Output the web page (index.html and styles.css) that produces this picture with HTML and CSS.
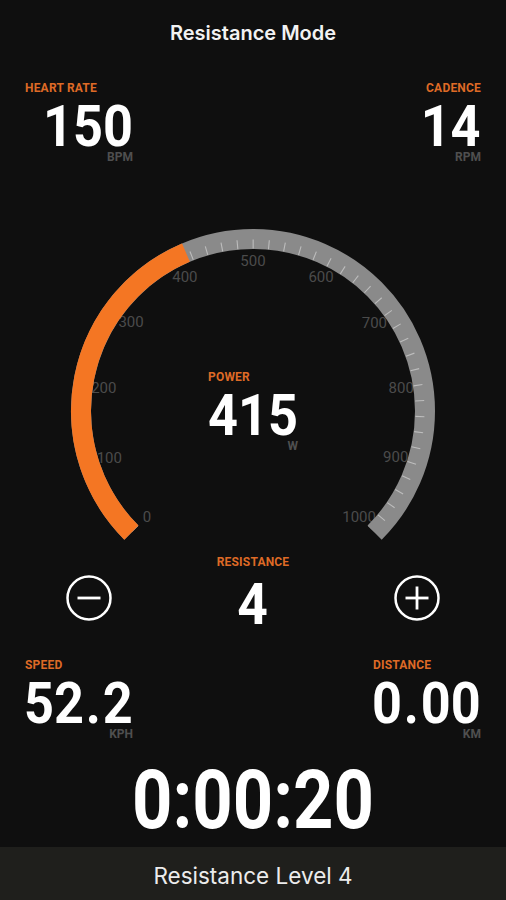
FILE: index.html
```html
<!DOCTYPE html>
<html lang="en">
<head>
    <meta charset="UTF-8">
    <meta name="viewport" content="width=device-width, initial-scale=1.0">
    <title>Resistance Mode</title>
    <link rel="stylesheet" href="styles.css">
</head>
<body>

    <header class="title">Resistance Mode</header>

    <section class="stat-row top-row">
        <div class="stat">
            <div class="stat-label">HEART RATE</div>
            <div class="stat-value">150</div>
            <div class="stat-unit">BPM</div>
        </div>
        <div class="stat">
            <div class="stat-label end">CADENCE</div>
            <div class="stat-value">14</div>
            <div class="stat-unit">RPM</div>
        </div>
    </section>

    <section class="gauge">
        <svg class="gauge-svg" width="506" height="330" viewBox="0 0 506 330">
            <g class="gauge-labels">
                <text x="146.9" y="301.1">0</text>
                <text x="109.3" y="241.8">100</text>
                <text x="103.8" y="171.5">200</text>
                <text x="131.1" y="106.3">300</text>
                <text x="184.9" y="61.3">400</text>
                <text x="253" y="45">500</text>
                <text x="321.1" y="61.3">600</text>
                <text x="374.4" y="106.8">700</text>
                <text x="401.2" y="171.5">800</text>
                <text x="395.7" y="241.4">900</text>
                <text x="359.1" y="301.1">1000</text>
            </g>
            <path class="track" d="M131.38 316.62 A172 172 0 1 1 374.62 316.62"/>
            <path class="ticks" d="M134.9 313.1 A167 167 0 1 1 371.1 313.1"/>
            <path class="fill" d="M131.38 316.62 A172 172 0 0 1 185.94 36.62"/>
        </svg>

        <div class="stat power">
            <div class="stat-label">POWER</div>
            <div class="stat-value">415</div>
            <div class="stat-unit">W</div>
        </div>
    </section>

    <section class="control-row">
        <button class="round-btn" aria-label="Decrease resistance">
            <svg width="46" height="46" viewBox="0 0 46 46">
                <circle cx="23" cy="23" r="21.5" fill="none" stroke="#fff" stroke-width="2.5"/>
                <line x1="11.5" y1="23" x2="34.5" y2="23" stroke="#fff" stroke-width="2.8"/>
            </svg>
        </button>
        <div class="level">
            <div class="stat-label">RESISTANCE</div>
            <div class="level-value">4</div>
        </div>
        <button class="round-btn" aria-label="Increase resistance">
            <svg width="46" height="46" viewBox="0 0 46 46">
                <circle cx="23" cy="23" r="21.5" fill="none" stroke="#fff" stroke-width="2.5"/>
                <line x1="11.5" y1="23" x2="34.5" y2="23" stroke="#fff" stroke-width="2.8"/>
                <line x1="23" y1="11.5" x2="23" y2="34.5" stroke="#fff" stroke-width="2.8"/>
            </svg>
        </button>
    </section>

    <section class="stat-row bottom-row">
        <div class="stat">
            <div class="stat-label">SPEED</div>
            <div class="stat-value">52<span class="dot">.</span>2</div>
            <div class="stat-unit">KPH</div>
        </div>
        <div class="stat">
            <div class="stat-label">DISTANCE</div>
            <div class="stat-value">0<span class="dot">.</span>00</div>
            <div class="stat-unit">KM</div>
        </div>
    </section>

    <div class="timer">0:00:20</div>

    <footer class="footer">Resistance Level 4</footer>

</body>
</html>
```

FILE: styles.css
```css
body {
    font-family: Roboto, "Liberation Sans", sans-serif;
    background-color: #0f0f0f;
    color: #fff;
    margin: 0;
    width: 506px;
    height: 900px;
    display: flex;
    flex-direction: column;
    overflow: hidden;
}

.title {
    height: 66px;
    display: flex;
    align-items: center;
    justify-content: center;
    font-family: Inter, "Liberation Sans", sans-serif;
    font-size: 20px;
    font-weight: 600;
    color: #f2f2f2;
}

.stat-row {
    display: flex;
    justify-content: space-between;
    padding: 0 25px;
}

.top-row {
    margin-top: 15px;
}

.bottom-row {
    margin-top: 30px;
}

.stat {
    width: 108px;
    display: flex;
    flex-direction: column;
    align-items: flex-end;
}

.stat-label {
    align-self: flex-start;
    font-size: 12px;
    line-height: 14px;
    font-weight: 700;
    color: #de6a26;
    letter-spacing: 0.2px;
}

.stat-label.end {
    align-self: flex-end;
}

.stat-value {
    margin-top: 7px;
    font-size: 58px;
    line-height: 48px;
    font-weight: 700;
    white-space: nowrap;
    transform: scaleX(0.9);
    transform-origin: right center;
}

.dot {
    margin: 0 2px;
}

.stat-unit {
    font-size: 12px;
    line-height: 14px;
    font-weight: 700;
    color: #4f4f4f;
}

/* gauge */
.gauge {
    position: relative;
    margin-top: 52px;
    height: 330px;
}

.gauge-svg {
    display: block;
}

.gauge-labels text {
    font-family: Roboto, sans-serif;
    font-size: 15px;
    fill: #4b4b4b;
    text-anchor: middle;
    dominant-baseline: central;
}

.track {
    fill: none;
    stroke: #8a8a8a;
    stroke-width: 20;
}

.ticks {
    fill: none;
    stroke: #bdbdbd;
    stroke-width: 9;
    stroke-dasharray: 1.1 14.639;
    stroke-dashoffset: 0.55;
}

.fill {
    fill: none;
    stroke: #f47623;
    stroke-width: 20;
}

.power {
    position: absolute;
    top: 154px;
    left: 50%;
    width: 90px;
    transform: translateX(-50%);
}

/* resistance controls */
.control-row {
    display: flex;
    justify-content: space-between;
    align-items: flex-start;
    padding: 0 66px;
    margin-top: 9px;
}

.round-btn {
    width: 46px;
    height: 46px;
    margin-top: 20px;
    padding: 0;
    border: none;
    background: none;
    cursor: pointer;
}

.round-btn svg {
    display: block;
}

.level {
    display: flex;
    flex-direction: column;
    align-items: center;
}

.level .stat-label {
    align-self: center;
}

.level-value {
    margin-top: 11px;
    font-size: 58px;
    line-height: 48px;
    font-weight: 700;
    transform: scaleX(0.92);
}

.timer {
    margin-top: 29px;
    text-align: center;
    font-size: 82px;
    line-height: 60px;
    font-weight: 700;
    transform: scaleX(0.86);
}

.footer {
    margin-top: auto;
    height: 53px;
    box-sizing: border-box;
    padding-top: 4px;
    background-color: #1f1f1c;
    display: flex;
    align-items: center;
    justify-content: center;
    font-family: Inter, "Liberation Sans", sans-serif;
    font-size: 22.5px;
    color: #ececec;
}
```
